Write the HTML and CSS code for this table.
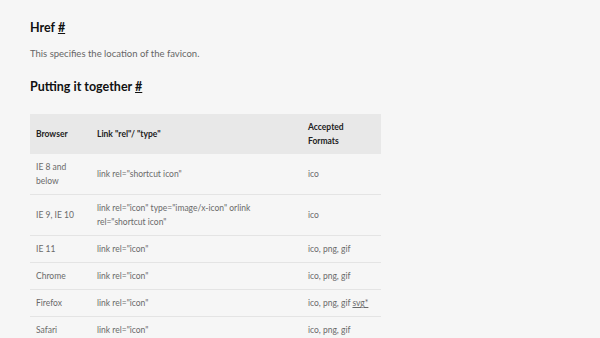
FILE: index.html
```html
<!DOCTYPE html>
<html lang="en">

<head>
  <meta charset="UTF-8" />
  <title>Favicon</title>
  <link rel="stylesheet" href="styles.css">
</head>

<body>
  <div class="content">
    <h2>Href <a href="#">#</a></h2>
    <p>This specifies the location of the favicon.</p>

    <h2 class="together">Putting it together <a href="#">#</a></h2>

    <table>
      <thead>
        <tr>
          <th class="col-browser">Browser</th>
          <th class="col-link">Link "rel"/ "type"</th>
          <th class="col-format">Accepted Formats</th>
        </tr>
      </thead>
      <tbody>
        <tr>
          <td>IE 8 and below</td>
          <td>link rel="shortcut icon"</td>
          <td>ico</td>
        </tr>
        <tr>
          <td>IE 9, IE 10</td>
          <td>link rel="icon" type="image/x-icon" orlink rel="shortcut icon"</td>
          <td>ico</td>
        </tr>
        <tr>
          <td>IE 11</td>
          <td>link rel="icon"</td>
          <td>ico, png, gif</td>
        </tr>
        <tr>
          <td>Chrome</td>
          <td>link rel="icon"</td>
          <td>ico, png, gif</td>
        </tr>
        <tr>
          <td>Firefox</td>
          <td>link rel="icon"</td>
          <td>ico, png, gif <a href="#">svg*</a></td>
        </tr>
        <tr>
          <td>Safari</td>
          <td>link rel="icon"</td>
          <td>ico, png, gif</td>
        </tr>
      </tbody>
    </table>
  </div>
</body>

</html>
```

FILE: styles.css
```css
body {
  margin: 0;
  background: #f6f6f6;
  font-family: Lato, sans-serif;
  color: #555;
}

.content {
  padding: 18px 30px;
}

h2 {
  margin: 0;
  font-size: 12.5px;
  line-height: 20px;
  font-weight: 700;
  color: #111;
}

h2 a {
  color: #111;
}

.together {
  margin-top: 15px;
}

p {
  margin: 8px 0 0;
  font-size: 9.5px;
  line-height: 16px;
  color: #666;
}

table {
  margin-top: 17px;
  width: 351px;
  border-collapse: collapse;
  font-size: 8.5px;
  line-height: 14px;
}

th {
  background: #e8e8e8;
  color: #222;
  text-align: left;
  font-weight: 700;
  padding: 6px 6px;
  height: 28px;
}

td {
  padding: 6px;
  color: #6a6a6a;
  border-bottom: 1px solid #e4e4e4;
  vertical-align: middle;
}

td a {
  color: #6a6a6a;
}

.col-browser {
  width: 49px;
}

.col-link {
  width: 199px;
}

.col-format {
  width: 67px;
}
```
